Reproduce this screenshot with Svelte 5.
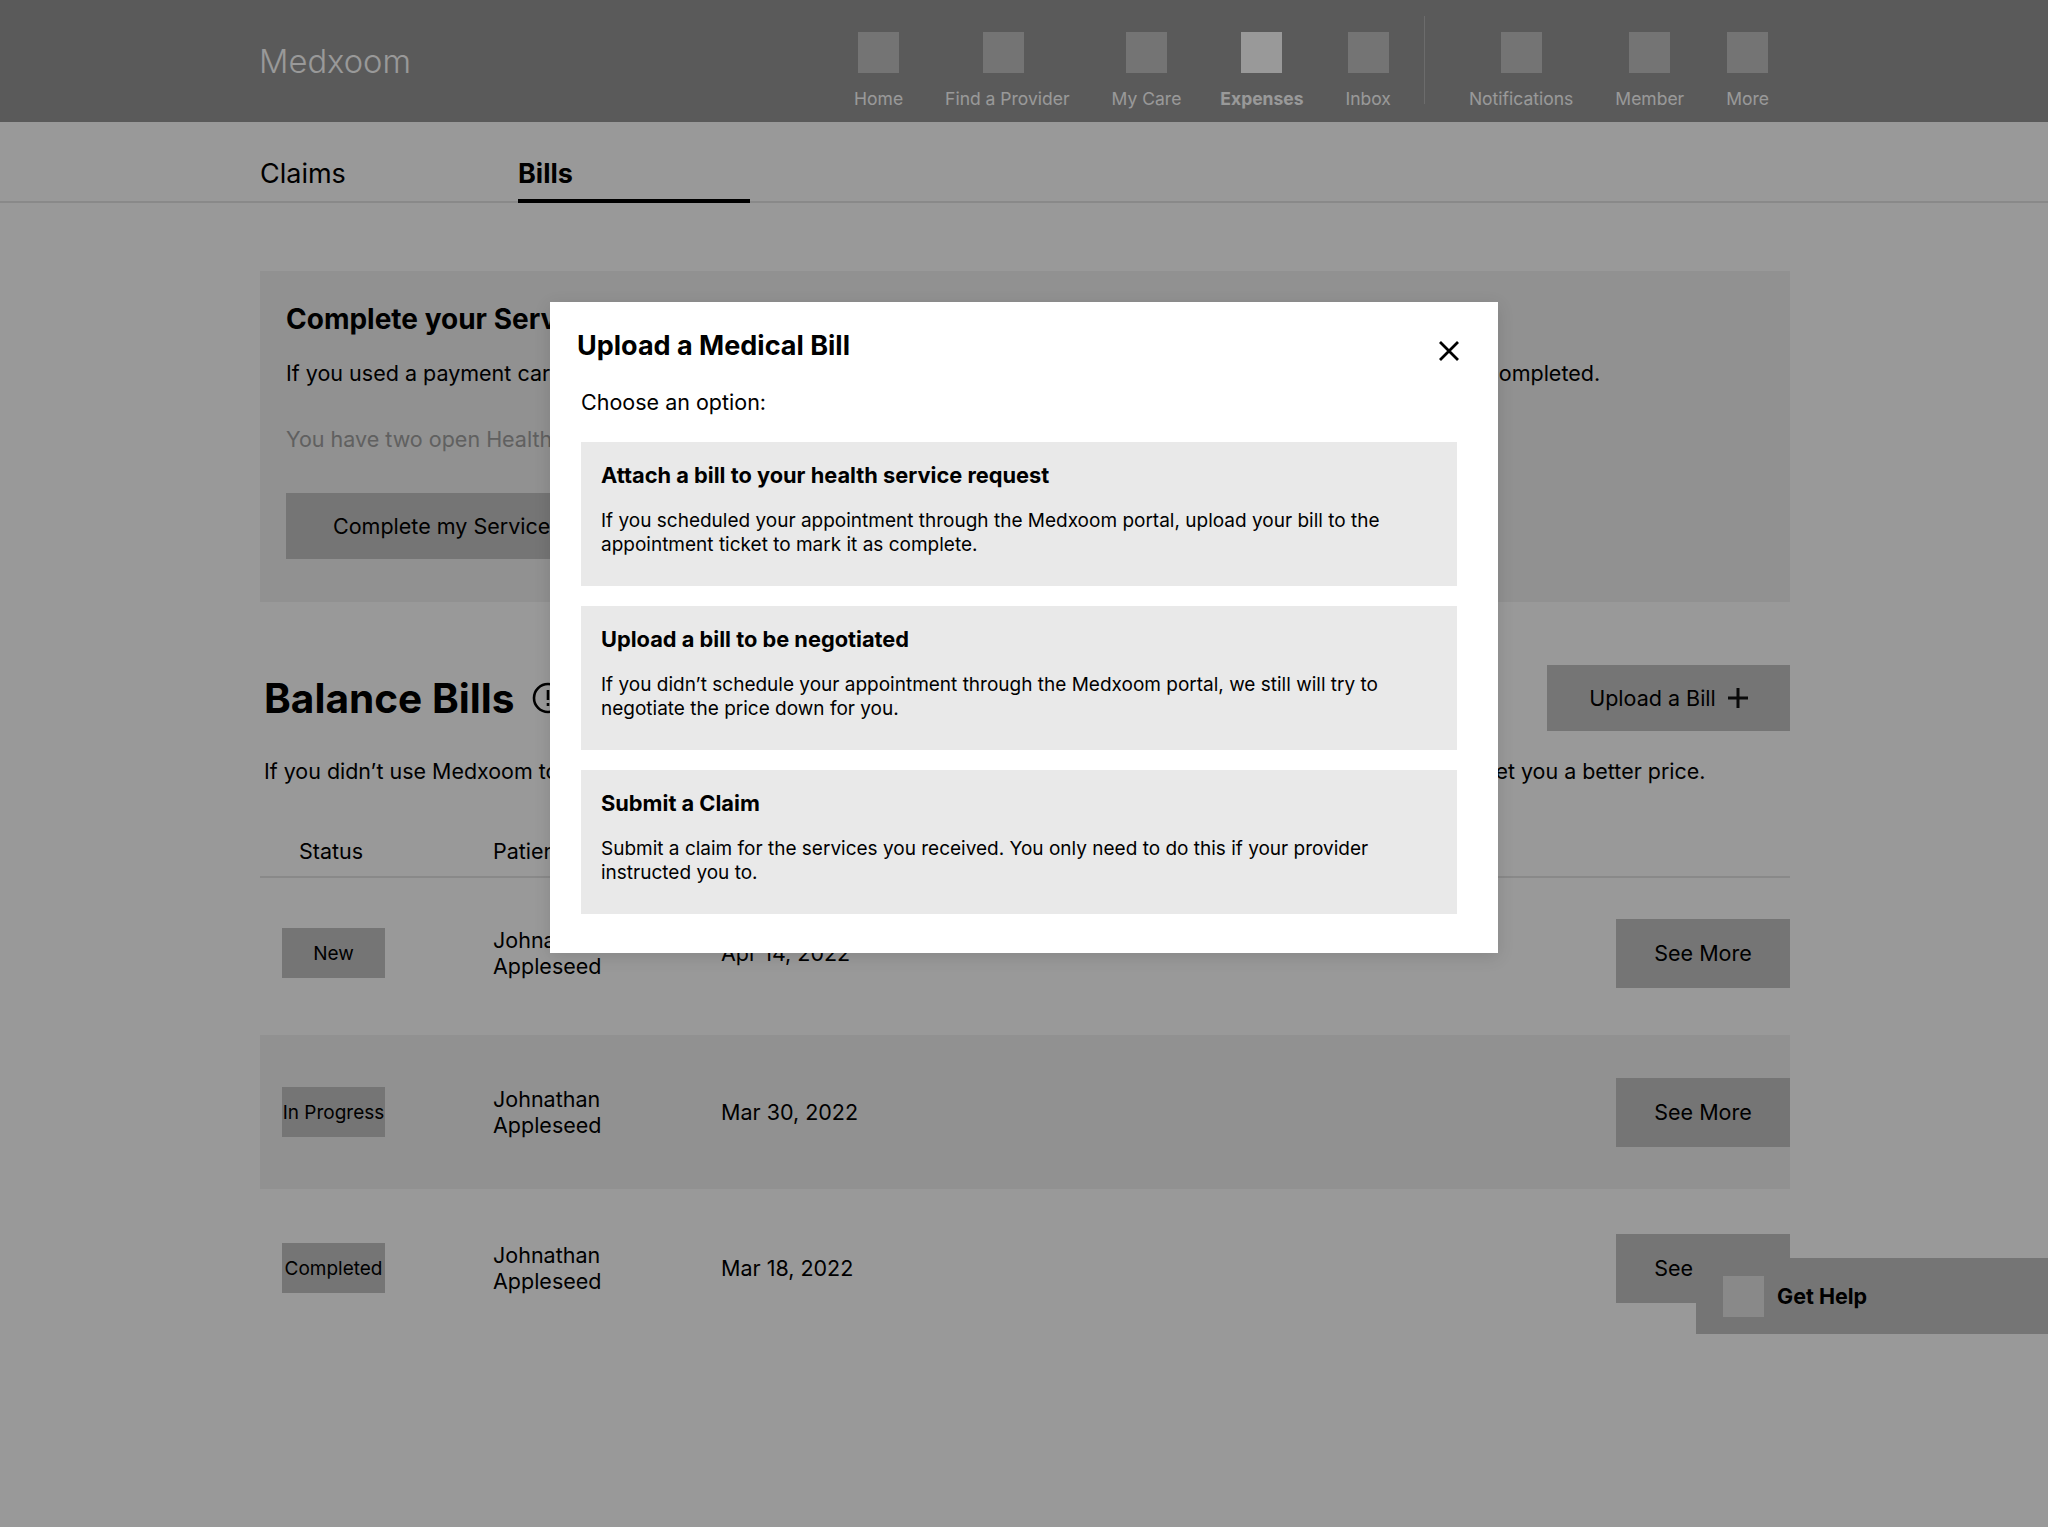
<script>
  const navMain = ["Home", "Find a Provider", "My Care", "Expenses", "Inbox"];
  const navAlt = ["Notifications", "Member", "More"];
  const options = [
    {
      title: "Attach a bill to your health service request",
      body: "If you scheduled your appointment through the Medxoom portal, upload your bill to the appointment ticket to mark it as complete."
    },
    {
      title: "Upload a bill to be negotiated",
      body: "If you didn’t schedule your appointment through the Medxoom portal, we still will try to negotiate the price down for you."
    },
    {
      title: "Submit a Claim",
      body: "Submit a claim for the services you received. You only need to do this if your provider instructed you to."
    }
  ];
  const bills = [
    { status: "New", date: "Apr 14, 2022" },
    { status: "In Progress", date: "Mar 30, 2022" },
    { status: "Completed", date: "Mar 18, 2022" }
  ];
</script>

<div class="page">
  <header class="topbar">
    <div class="logo">Medxoom</div>
    <nav class="nav">
      {#each navMain as item}
        <div class="nav-item" class:active={item === "Expenses"}>
          <span class="nav-icon"></span>
          <span>{item}</span>
        </div>
      {/each}
      <div class="nav-sep"></div>
      {#each navAlt as item}
        <div class="nav-item">
          <span class="nav-icon"></span>
          <span>{item}</span>
        </div>
      {/each}
    </nav>
  </header>

  <div class="tabs">
    <div class="tab">Claims</div>
    <div class="tab current">Bills</div>
  </div>

  <main class="content">
    <section class="service">
      <h2>Complete your Service Requests</h2>
      <p>If you used a payment card for your recent service, upload your bill so your Health Service Request can be marked as completed.</p>
      <p class="muted">You have two open Health Service Requests.</p>
      <button class="btn service-btn">Complete my Service Requests</button>
    </section>

    <section class="balance">
      <div class="balance-head">
        <h1>Balance Bills</h1>
        <svg class="info" viewBox="0 0 32 32" width="32" height="32" fill="none" stroke="#000" stroke-width="2.6">
          <circle cx="16" cy="16" r="14"></circle>
          <path d="M16 8v10M16 21v3"></path>
        </svg>
        <button class="btn upload">Upload a Bill
          <svg viewBox="0 0 20 20" width="20" height="20" stroke="#111" stroke-width="3"><path d="M10 0v20M0 10h20"></path></svg>
        </button>
      </div>
      <p class="intro">If you didn’t use Medxoom to schedule your appointment, upload your bill and we will work with your provider to try and get you a better price.</p>
    </section>

    <div class="table">
      <div class="thead">
        <span class="col-status">Status</span>
        <span class="col-patient">Patient</span>
        <span>Date</span>
      </div>
      {#each bills as bill, i}
        <div class="row" class:band={i === 1}>
          <span class="pill">{bill.status}</span>
          <span class="col-patient">Johnathan Appleseed</span>
          <span class="col-date">{bill.date}</span>
          <button class="btn more">See More</button>
        </div>
      {/each}
    </div>
  </main>

  <div class="help">
    <span class="help-icon"></span>
    <span>Get Help</span>
  </div>

  <div class="overlay"></div>

  <div class="modal">
    <div class="modal-head">
      <h3>Upload a Medical Bill</h3>
      <svg class="close" viewBox="0 0 20 20" width="20" height="20" stroke="#000" stroke-width="2.8"><path d="M1 1l18 18M19 1L1 19"></path></svg>
    </div>
    <p class="choose">Choose an option:</p>
    {#each options as opt}
      <div class="option">
        <h4>{opt.title}</h4>
        <p>{opt.body}</p>
      </div>
    {/each}
  </div>
</div>

<style>
  :global(body) {
    margin: 0;
    background: #fff;
  }

  .page {
    position: relative;
    height: 1527px;
    overflow: hidden;
    font-family: Inter, "Liberation Sans", sans-serif;
    color: #000;
    font-size: 21.5px;
  }

  .topbar {
    height: 122px;
    background: #969696;
    display: flex;
    align-items: flex-start;
    justify-content: space-between;
    padding: 0 279px 0 259px;
    box-sizing: border-box;
    color: #fff;
  }
  .logo {
    font-size: 32.7px;
    font-weight: 300;
    line-height: 40px;
    margin-top: 41px;
  }
  .nav {
    display: flex;
    align-items: flex-start;
    gap: 42px;
    padding-top: 32px;
    position: relative;
  }
  .nav-item {
    display: flex;
    flex-direction: column;
    align-items: center;
    gap: 15px;
    font-size: 17.5px;
    line-height: 22px;
  }
  .nav-item:nth-child(3) {
    margin-right: -3px;
  }
  .nav-item.active {
    font-weight: 700;
  }
  .nav-icon {
    width: 41px;
    height: 41px;
    background: #c1c1c1;
  }
  .nav-item:nth-child(2) .nav-icon {
    margin-right: 8px;
  }
  .active .nav-icon {
    background: #fff;
  }
  .nav-sep {
    width: 1px;
    height: 88px;
    margin: -16px 2px 0 -9px;
    background: #b5b5b5;
  }

  .tabs {
    display: flex;
    height: 79px;
    padding-left: 260px;
    border-bottom: 2px solid #e4e4e4;
  }
  .tab {
    width: 258px;
    font-size: 27px;
    line-height: 34px;
    padding-top: 35px;
  }
  .tab.current {
    width: 232px;
    font-weight: 700;
    border-bottom: 4px solid #000;
    height: 42px;
  }

  .content {
    width: 1530px;
    margin: 68px 0 0 260px;
  }

  .service {
    height: 331px;
    box-sizing: border-box;
    background: #f2f2f2;
    padding: 31px 26px;
  }
  .service h2 {
    margin: 0;
    font-size: 28px;
    line-height: 34px;
    font-weight: 700;
  }
  .service p {
    margin: 23px 0 0;
    line-height: 28px;
    white-space: nowrap;
  }
  .service p.muted {
    margin-top: 38px;
    color: #a0a0a0;
  }

  .btn {
    border: 0;
    background: #c3c3c3;
    color: #000;
    font: inherit;
    padding: 0;
  }
  .service-btn {
    display: block;
    margin-top: 40px;
    height: 66px;
    padding: 0 47px;
  }

  .balance {
    margin: 63px 0 0 4px;
  }
  .balance-head {
    display: flex;
    align-items: center;
    height: 66px;
  }
  h1 {
    margin: 0;
    font-size: 40.6px;
    font-weight: 700;
  }
  .info {
    margin-left: 18px;
  }
  .upload {
    margin-left: auto;
    width: 243px;
    height: 66px;
    display: flex;
    align-items: center;
    justify-content: center;
    gap: 12px;
  }
  .intro {
    margin: 27px 0 0;
    font-size: 21.45px;
    line-height: 27px;
    white-space: nowrap;
  }

  .table {
    margin-top: 52px;
  }
  .thead {
    display: flex;
    height: 39px;
    line-height: 28px;
    border-bottom: 2px solid #e4e4e4;
    margin-bottom: -2px;
  }
  .thead .col-status {
    width: 194px;
    padding-left: 39px;
    box-sizing: border-box;
    margin-right: 39px;
  }
  .thead .col-patient {
    width: 227px;
  }
  .row {
    display: flex;
    align-items: center;
    height: 154px;
    padding-left: 22px;
    line-height: 26px;
  }
  .row.band {
    background: #f2f2f2;
    margin: 5px 0 2px;
  }
  .pill {
    width: 103px;
    height: 48px;
    padding-top: 2px;
    display: flex;
    align-items: center;
    justify-content: center;
    background: #c3c3c3;
    font-size: 19px;
    white-space: nowrap;
    margin-right: 108px;
  }
  .row .col-patient {
    width: 228px;
    padding-right: 60px;
    box-sizing: border-box;
  }
  .more {
    margin-left: auto;
    width: 174px;
    height: 69px;
  }

  .help {
    position: absolute;
    left: 1696px;
    right: 0;
    top: 1258px;
    height: 76px;
    background: #c3c3c3;
    display: flex;
    align-items: center;
    padding-left: 27px;
    gap: 13px;
    font-weight: 700;
  }
  .help-icon {
    width: 41px;
    height: 41px;
    background: #e4e4e4;
  }

  .overlay {
    position: absolute;
    inset: 0;
    background: rgba(0, 0, 0, 0.4);
  }

  .modal {
    position: absolute;
    left: 550px;
    top: 302px;
    width: 948px;
    height: 651px;
    box-sizing: border-box;
    background: #fff;
    padding: 24px 41px 0 31px;
    box-shadow: 0 4px 16px rgba(0, 0, 0, 0.12);
  }
  .modal-head {
    display: flex;
    justify-content: space-between;
    align-items: flex-start;
    margin-left: -4px;
  }
  .modal-head h3 {
    margin: 0;
    font-size: 27px;
    line-height: 39px;
    font-weight: 700;
  }
  .close {
    margin: 15px -2px 0 0;
  }
  .choose {
    margin: 23px 0 0;
    line-height: 28px;
  }
  .option {
    height: 144px;
    box-sizing: border-box;
    background: #e9e9e9;
    padding: 19px 20px;
    margin-top: 20px;
  }
  .choose + .option {
    margin-top: 26px;
  }
  .option h4 {
    margin: 0;
    font-size: 21.8px;
    line-height: 28px;
    font-weight: 700;
  }
  .option p {
    margin: 20px 0 0;
    font-size: 19px;
    line-height: 23.5px;
  }
</style>
